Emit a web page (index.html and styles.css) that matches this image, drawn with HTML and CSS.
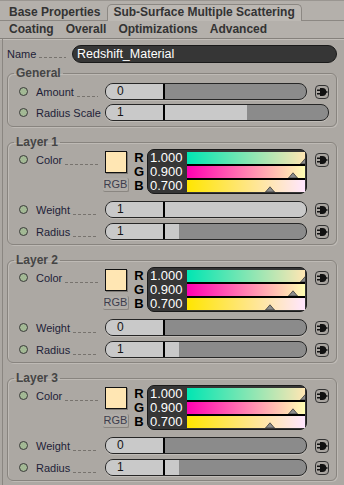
FILE: index.html
```html
<html>
<head>
<title>Redshift Material</title>
<link rel="stylesheet" href="styles.css">
</head>
<body>

<div class="tabs">
<div class="tabrow top">
<span class="tab">Base Properties</span>
<span class="tab active">Sub-Surface Multiple Scattering</span>
</div>
<div class="tabrow">
<span class="tab">Coating</span>
<span class="tab">Overall</span>
<span class="tab">Optimizations</span>
<span class="tab">Advanced</span>
</div>
</div>

<div class="panel">

<div class="namerow">
<div class="namelbl"><span class="lbl">Name</span><span class="lead"></span></div>
<div class="namefield">Redshift_Material</div>
</div>

<fieldset class="group general">
<legend>General</legend>
<div class="row">
<div class="lblcell"><i class="dot"></i><span class="lbl">Amount</span><span class="lead"></span></div>
<div class="slider"><span class="num">0</span><span class="track"><b style="width:0%"></b></span></div>
<svg class="plug" viewBox="0 0 14 14"><rect x="0.5" y="0.5" width="13" height="13" rx="3.5" fill="#a9a5a0" stroke="#333"/><path d="M5 3h2.3a4 4 0 0 1 0 8H5z" fill="#111"/><path d="M2 5.2h3.5M2 8.8h3.5M10.5 7h2" stroke="#111" stroke-width="1.6"/></svg>
</div>
<div class="row">
<div class="lblcell"><i class="dot"></i><span class="lbl">Radius Scale</span><span class="lead"></span></div>
<div class="slider"><span class="num">1</span><span class="track"><b style="width:50%"></b></span></div>
</div>
</fieldset>

<fieldset class="group">
<legend>Layer 1</legend>
<div class="row color">
<div class="lblcell"><i class="dot"></i><span class="lbl">Color</span><span class="lead"></span></div>
<div class="swatchcol"><span class="swatch"></span><span class="rgbbtn">RGB</span></div>
<div class="chan"><b>R</b><b>G</b><b>B</b></div>
<div class="picker">
<div class="vals"><span>1.000</span><span>0.900</span><span>0.700</span></div>
<div class="bars">
<div class="bar r"><svg class="tri" style="left:100%" viewBox="0 0 10 6"><path d="M0.5 6 5 0.8 9.5 6z"/></svg></div>
<div class="bar g"><svg class="tri" style="left:90%" viewBox="0 0 10 6"><path d="M0.5 6 5 0.8 9.5 6z"/></svg></div>
<div class="bar b"><svg class="tri" style="left:70%" viewBox="0 0 10 6"><path d="M0.5 6 5 0.8 9.5 6z"/></svg></div>
</div>
</div>
<svg class="plug" viewBox="0 0 14 14"><rect x="0.5" y="0.5" width="13" height="13" rx="3.5" fill="#a9a5a0" stroke="#333"/><path d="M5 3h2.3a4 4 0 0 1 0 8H5z" fill="#111"/><path d="M2 5.2h3.5M2 8.8h3.5M10.5 7h2" stroke="#111" stroke-width="1.6"/></svg>
</div>
<div class="row">
<div class="lblcell"><i class="dot"></i><span class="lbl">Weight</span><span class="lead"></span></div>
<div class="slider"><span class="num">1</span><span class="track"><b style="width:100%"></b></span></div>
<svg class="plug" viewBox="0 0 14 14"><rect x="0.5" y="0.5" width="13" height="13" rx="3.5" fill="#a9a5a0" stroke="#333"/><path d="M5 3h2.3a4 4 0 0 1 0 8H5z" fill="#111"/><path d="M2 5.2h3.5M2 8.8h3.5M10.5 7h2" stroke="#111" stroke-width="1.6"/></svg>
</div>
<div class="row">
<div class="lblcell"><i class="dot"></i><span class="lbl">Radius</span><span class="lead"></span></div>
<div class="slider"><span class="num">1</span><span class="track"><b style="width:10%"></b></span></div>
<svg class="plug" viewBox="0 0 14 14"><rect x="0.5" y="0.5" width="13" height="13" rx="3.5" fill="#a9a5a0" stroke="#333"/><path d="M5 3h2.3a4 4 0 0 1 0 8H5z" fill="#111"/><path d="M2 5.2h3.5M2 8.8h3.5M10.5 7h2" stroke="#111" stroke-width="1.6"/></svg>
</div>
</fieldset>

<fieldset class="group">
<legend>Layer 2</legend>
<div class="row color">
<div class="lblcell"><i class="dot"></i><span class="lbl">Color</span><span class="lead"></span></div>
<div class="swatchcol"><span class="swatch"></span><span class="rgbbtn">RGB</span></div>
<div class="chan"><b>R</b><b>G</b><b>B</b></div>
<div class="picker">
<div class="vals"><span>1.000</span><span>0.900</span><span>0.700</span></div>
<div class="bars">
<div class="bar r"><svg class="tri" style="left:100%" viewBox="0 0 10 6"><path d="M0.5 6 5 0.8 9.5 6z"/></svg></div>
<div class="bar g"><svg class="tri" style="left:90%" viewBox="0 0 10 6"><path d="M0.5 6 5 0.8 9.5 6z"/></svg></div>
<div class="bar b"><svg class="tri" style="left:70%" viewBox="0 0 10 6"><path d="M0.5 6 5 0.8 9.5 6z"/></svg></div>
</div>
</div>
<svg class="plug" viewBox="0 0 14 14"><rect x="0.5" y="0.5" width="13" height="13" rx="3.5" fill="#a9a5a0" stroke="#333"/><path d="M5 3h2.3a4 4 0 0 1 0 8H5z" fill="#111"/><path d="M2 5.2h3.5M2 8.8h3.5M10.5 7h2" stroke="#111" stroke-width="1.6"/></svg>
</div>
<div class="row">
<div class="lblcell"><i class="dot"></i><span class="lbl">Weight</span><span class="lead"></span></div>
<div class="slider"><span class="num">0</span><span class="track"><b style="width:0%"></b></span></div>
<svg class="plug" viewBox="0 0 14 14"><rect x="0.5" y="0.5" width="13" height="13" rx="3.5" fill="#a9a5a0" stroke="#333"/><path d="M5 3h2.3a4 4 0 0 1 0 8H5z" fill="#111"/><path d="M2 5.2h3.5M2 8.8h3.5M10.5 7h2" stroke="#111" stroke-width="1.6"/></svg>
</div>
<div class="row">
<div class="lblcell"><i class="dot"></i><span class="lbl">Radius</span><span class="lead"></span></div>
<div class="slider"><span class="num">1</span><span class="track"><b style="width:10%"></b></span></div>
<svg class="plug" viewBox="0 0 14 14"><rect x="0.5" y="0.5" width="13" height="13" rx="3.5" fill="#a9a5a0" stroke="#333"/><path d="M5 3h2.3a4 4 0 0 1 0 8H5z" fill="#111"/><path d="M2 5.2h3.5M2 8.8h3.5M10.5 7h2" stroke="#111" stroke-width="1.6"/></svg>
</div>
</fieldset>

<fieldset class="group">
<legend>Layer 3</legend>
<div class="row color">
<div class="lblcell"><i class="dot"></i><span class="lbl">Color</span><span class="lead"></span></div>
<div class="swatchcol"><span class="swatch"></span><span class="rgbbtn">RGB</span></div>
<div class="chan"><b>R</b><b>G</b><b>B</b></div>
<div class="picker">
<div class="vals"><span>1.000</span><span>0.900</span><span>0.700</span></div>
<div class="bars">
<div class="bar r"><svg class="tri" style="left:100%" viewBox="0 0 10 6"><path d="M0.5 6 5 0.8 9.5 6z"/></svg></div>
<div class="bar g"><svg class="tri" style="left:90%" viewBox="0 0 10 6"><path d="M0.5 6 5 0.8 9.5 6z"/></svg></div>
<div class="bar b"><svg class="tri" style="left:70%" viewBox="0 0 10 6"><path d="M0.5 6 5 0.8 9.5 6z"/></svg></div>
</div>
</div>
<svg class="plug" viewBox="0 0 14 14"><rect x="0.5" y="0.5" width="13" height="13" rx="3.5" fill="#a9a5a0" stroke="#333"/><path d="M5 3h2.3a4 4 0 0 1 0 8H5z" fill="#111"/><path d="M2 5.2h3.5M2 8.8h3.5M10.5 7h2" stroke="#111" stroke-width="1.6"/></svg>
</div>
<div class="row">
<div class="lblcell"><i class="dot"></i><span class="lbl">Weight</span><span class="lead"></span></div>
<div class="slider"><span class="num">0</span><span class="track"><b style="width:0%"></b></span></div>
<svg class="plug" viewBox="0 0 14 14"><rect x="0.5" y="0.5" width="13" height="13" rx="3.5" fill="#a9a5a0" stroke="#333"/><path d="M5 3h2.3a4 4 0 0 1 0 8H5z" fill="#111"/><path d="M2 5.2h3.5M2 8.8h3.5M10.5 7h2" stroke="#111" stroke-width="1.6"/></svg>
</div>
<div class="row">
<div class="lblcell"><i class="dot"></i><span class="lbl">Radius</span><span class="lead"></span></div>
<div class="slider"><span class="num">1</span><span class="track"><b style="width:10%"></b></span></div>
<svg class="plug" viewBox="0 0 14 14"><rect x="0.5" y="0.5" width="13" height="13" rx="3.5" fill="#a9a5a0" stroke="#333"/><path d="M5 3h2.3a4 4 0 0 1 0 8H5z" fill="#111"/><path d="M2 5.2h3.5M2 8.8h3.5M10.5 7h2" stroke="#111" stroke-width="1.6"/></svg>
</div>
</fieldset>

</div>

</body>
</html>
```

FILE: styles.css
```css
body {margin: 0; background: #aca8a3; font-family: "Liberation Sans", Arial, sans-serif; font-size: 11px; color: #1e1e38; overflow: hidden;}

/* tabs */
.tabs {background: #b4b0ab;}
.tabrow {display: flex; padding-left: 3px; font-weight: bold; font-size: 12px; color: #333;}
.tabrow.top {align-items: flex-end; border-bottom: 1px solid #8c8883; border-top: 1px solid #9a9691; box-sizing: border-box; height: 21px;}
.tabrow.top .tab {line-height: 15px;}
.tab {padding: 0 6px; line-height: 17px;}
.tab.active {background: #bcb8b3; border: 1px solid #8c8883; border-bottom: 0; border-radius: 5px 5px 0 0; margin: 0 0 -1px 1px; padding: 0 6px 1px 5px;}
.tabs .tabrow + .tabrow {height: 17px; border-bottom: 1px solid #85817c; box-shadow: 0 1px 0 #c2beb9;}

/* panel */
.panel {margin-left: 2px; border-left: 1px solid #8a8681; padding: 6px 7px 0 4px; height: 440px;}

.namerow {display: flex; align-items: center; height: 18px;}
.namelbl {width: 65px; display: flex; align-items: baseline; padding-right: 6px; box-sizing: border-box;}
.namefield {flex: 1; height: 18px; box-sizing: border-box; background: #363636; border: 1px solid #1a1a1a; border-radius: 9px; color: #fff; font-size: 12.5px; line-height: 16px; padding-left: 4px;}

.lbl {white-space: nowrap;}
.lead {flex: 1; height: 8px; margin-left: 3px; background: linear-gradient(to right, #77736e 60%, transparent 0) left bottom / 5px 1px repeat-x;}

/* groups */
.group {margin: 3px 0 0; padding: 0 7px 4px 11px; border: 1px solid #88847f; border-radius: 6px; box-shadow: inset 1px 1px 0 #bebab5, 1px 1px 0 #bebab5; min-width: 0;}
.group + .group {margin-top: 8px;}
.group legend {font-weight: bold; font-size: 12px; line-height: 14px; color: #454545; padding: 0 2px; margin-left: -5px;}
.general {padding-top: 3px; padding-bottom: 5px;}
.general .row + .row {margin-top: 4px;}

.row {display: flex; align-items: center; height: 17px;}
.row + .row {margin-top: 5px;}
.row.color + .row {margin-top: 7px;}
.lblcell {width: 86px; height: 17px; display: flex; align-items: center; padding-right: 7px; box-sizing: border-box;}
.lblcell .lead {align-self: flex-end; height: 4px; margin-bottom: 3px;}
.dot {width: 9px; height: 9px; box-sizing: border-box; border-radius: 50%; background: #a3b995; border: 1px solid #3a3a3a; margin-right: 8px; flex: none;}

.slider {flex: 1; display: flex; height: 17px; box-sizing: border-box; border: 1px solid #262626; border-radius: 8px; overflow: hidden; background: #8b8b8b; box-shadow: 0 1px 0 #c0bcb7;}
.num {width: 59px; box-sizing: border-box; border-right: 2px solid #000; background: #c9c9c9; padding-left: 11px; font-size: 12px; line-height: 15px; color: #141414;}
.track {flex: 1;}
.track b {display: block; height: 100%; background: #c9c9c9;}

.plug {width: 14px; height: 14px; margin-left: 8px; flex: none;}

/* color row */
.row.color {height: 45px; align-items: flex-start;}
.row.color .lblcell {margin-top: 2px;}
.row.color .plug {margin-top: 4px;}
.swatchcol {width: 26px; margin-left: -2px; display: flex; flex-direction: column; align-items: center; padding-top: 2px;}
.swatch {width: 22px; height: 22px; box-sizing: border-box; background: #ffe6b3; border: 1px solid #111; box-shadow: 1px 1px 0 #7c7873;}
.rgbbtn {margin-top: 5px; width: 26px; height: 14px; box-sizing: border-box; text-align: center; line-height: 13px; font-size: 11px; color: #3c3c4c; background: #b0aca7; border-radius: 2px; border-bottom: 1px solid #8a8681; border-right: 1px solid #8a8681;}
.chan {width: 10px; margin-left: 5px; padding-top: 2px; display: flex; flex-direction: column; align-items: center;}
.chan b {font-size: 13px; line-height: 14px; color: #000;}
.picker {flex: 1; margin-left: 3px; height: 45px; box-sizing: border-box; background: #363636; border: 1px solid #1a1a1a; border-radius: 7px; display: flex; padding: 2px 1px 1px 1px;}
.vals {width: 37px; display: flex; flex-direction: column; color: #fff; font-size: 13px; line-height: 14px; padding-left: 1px; margin-top: -1px;}
.bars {flex: 1; display: flex; flex-direction: column; gap: 2px; background: #000;}
.bar {height: 12px; position: relative; overflow: hidden;}
.bar.r {background: linear-gradient(to right, #00e6b3, #ffe6b3);}
.bar.g {background: linear-gradient(to right, #ff00b3, #ffffb3);}
.bar.b {background: linear-gradient(to right, #ffe600, #ffe6ff);}
.tri {position: absolute; bottom: 0; width: 10px; height: 6px; margin-left: -5px;}
.tri path {fill: #8c8c8c; stroke: #3a3a3a; stroke-width: 0.8;}
```
